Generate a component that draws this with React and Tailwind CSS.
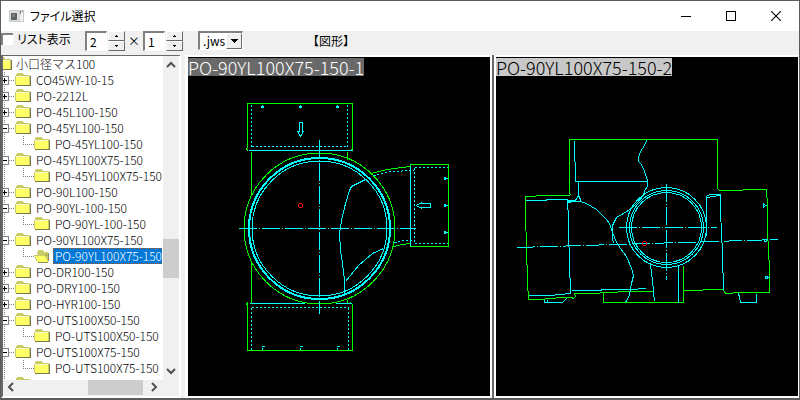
import React, { useState } from 'react';

const TREE = [
  { id: 1, level: 1, state: 'plus', label: 'CO45WY-10-15' },
  { id: 2, level: 1, state: 'plus', label: 'PO-2212L' },
  { id: 3, level: 1, state: 'plus', label: 'PO-45L100-150' },
  { id: 4, level: 1, state: 'minus', label: 'PO-45YL100-150' },
  { id: 5, level: 2, label: 'PO-45YL100-150' },
  { id: 6, level: 1, state: 'minus', label: 'PO-45YL100X75-150' },
  { id: 7, level: 2, label: 'PO-45YL100X75-150' },
  { id: 8, level: 1, state: 'plus', label: 'PO-90L100-150' },
  { id: 9, level: 1, state: 'minus', label: 'PO-90YL-100-150' },
  { id: 10, level: 2, label: 'PO-90YL-100-150' },
  { id: 11, level: 1, state: 'minus', label: 'PO-90YL100X75-150' },
  { id: 12, level: 2, label: 'PO-90YL100X75-150' },
  { id: 13, level: 1, state: 'plus', label: 'PO-DR100-150' },
  { id: 14, level: 1, state: 'plus', label: 'PO-DRY100-150' },
  { id: 15, level: 1, state: 'plus', label: 'PO-HYR100-150' },
  { id: 16, level: 1, state: 'minus', label: 'PO-UTS100X50-150' },
  { id: 17, level: 2, label: 'PO-UTS100X50-150' },
  { id: 18, level: 1, state: 'minus', label: 'PO-UTS100X75-150' },
  { id: 19, level: 2, label: 'PO-UTS100X75-150' },
];

const GREEN = '#00ff00';
const CYAN = '#00ffff';
const CENTER_DASH = '18 2 1 2';

const FolderIcon = ({ open, clipped }) => (
  <svg
    className={clipped ? 'w-[9px] h-4 shrink-0' : 'w-4 h-4 shrink-0'}
    viewBox={clipped ? '7 0 9 16' : '0 0 16 16'}
    shapeRendering="crispEdges"
    aria-hidden="true"
  >
    {open ? (
      <>
        <path d="M3 4h1V2h5v1h1v1h4v9H5z" fill="#cccc66" />
        <path d="M14 5h1v8h-1zM12 6h1v2h-1z" fill="#8c8c5a" />
        <path d="M1 7h10v2h1v2h1v2h1v1H3v-2H2v-2H1z" fill="#ffff66" />
        <path d="M0 7h11v1H0zM1 9h1v2H1zM2 11h1v2H2z" fill="#cccc66" />
        <path d="M3 14h11v1H4z" fill="#8c8c5a" />
      </>
    ) : (
      <>
        <path d="M1 14h15V4h-1v9H1z" fill="#77774a" />
        <path d="M0 4h1V2h1V1h6v1h1v1h6v10H0z" fill="#cccc66" />
        <path d="M1 4h13v9H1z" fill="#ffff66" />
        <path d="M1 4h13v1H1z" fill="#f5f5d0" />
      </>
    )}
  </svg>
);

const BranchLines = ({ level, state }) =>
  level === 1 ? (
    <svg className="w-3 h-4 shrink-0" viewBox="0 0 12 16" shapeRendering="crispEdges" aria-hidden="true">
      <path d="M1.5 0v16" stroke="#808080" strokeDasharray="1 1" />
      <path d="M6 8.5h6" stroke="#808080" strokeDasharray="1 1" />
      <path d="M-1 4.5h6.5v8H-1" fill="#fff" stroke="#808080" />
      <path d="M0 8.5h4" stroke="#000" />
      {state === 'plus' && <path d="M1.5 6v5" stroke="#000" />}
    </svg>
  ) : (
    <svg className="w-[31px] h-4 shrink-0" viewBox="0 0 31 16" shapeRendering="crispEdges" aria-hidden="true">
      <path d="M1.5 0v16M20.5 0v9M20 8.5h11" fill="none" stroke="#808080" strokeDasharray="1 1" />
    </svg>
  );

const Chevron = ({ d }) => (
  <svg className="w-4 h-4" viewBox="0 0 16 16" fill="none" stroke="#505050" strokeWidth="2" aria-hidden="true">
    <path d={d} />
  </svg>
);

const Spinner = ({ label, value, onChange }) => (
  <div className="flex items-start gap-px">
    <input
      type="text"
      aria-label={label}
      value={value}
      onChange={(e) => onChange(Number(e.target.value) || 1)}
      className="w-[22px] h-5 pl-[3px] pb-px bg-white border-t-2 border-l-2 border-b border-r border-t-[#808080] border-l-[#808080] border-b-white border-r-white text-[12px] leading-4 outline-none"
    />
    <div className="flex flex-col w-[17px]">
      {[1, -1].map((step) => (
        <button
          key={step}
          type="button"
          aria-label={step > 0 ? `${label} +` : `${label} -`}
          onClick={() => onChange(Math.max(1, value + step))}
          className="h-[10px] flex items-center justify-center bg-[#f0f0f0] border border-t-white border-l-white border-b-[#696969] border-r-[#696969]"
        >
          <svg width="3" height="2" viewBox="0 0 3 2" shapeRendering="crispEdges" aria-hidden="true">
            <path d={step > 0 ? 'M1 0h1v1h1v1H0V1h1z' : 'M0 0h3v1H2v1H1V1H0z'} fill="#000" />
          </svg>
        </button>
      ))}
    </div>
  </div>
);

const TitleBar = () => (
  <header className="h-[30px] shrink-0 flex items-center bg-white">
    <svg className="ml-2 w-4 h-[14px]" viewBox="0 0 16 14" shapeRendering="crispEdges" aria-hidden="true">
      <path d="M0 1h15v12H0z" fill="#c8cccc" />
      <path d="M1 2h9v10H1z" fill="#dedede" />
      <path d="M2 4h6v7H2z" fill="#606464" />
      <path d="M3 5h3v3H3z" fill="#7c8080" />
      <path d="M11 3h3v9h-3z" fill="#f4f4f4" />
      <path d="M11 2h1v3h-1zM13 2h1v1h-1z" fill="#808484" />
    </svg>
    <h1 className="ml-[5px] text-[12px] leading-4 font-normal text-black [font-feature-settings:'palt']">ファイル選択</h1>
    <div className="ml-auto flex h-full">
      <button type="button" aria-label="最小化" className="w-[45px] flex items-center justify-center">
        <svg width="10" height="10" viewBox="0 0 10 10" shapeRendering="crispEdges"><path d="M0 5.5h10" stroke="#000" /></svg>
      </button>
      <button type="button" aria-label="最大化" className="w-[45px] flex items-center justify-center">
        <svg width="10" height="10" viewBox="0 0 10 10" shapeRendering="crispEdges"><path d="M.5.5h9v9h-9z" fill="none" stroke="#000" /></svg>
      </button>
      <button type="button" aria-label="閉じる" className="w-[46px] flex items-center justify-center">
        <svg width="10" height="10" viewBox="0 0 10 10"><path d="M0 0l10 10M10 0L0 10" stroke="#000" strokeWidth="1.1" /></svg>
      </button>
    </div>
  </header>
);

const Toolbar = () => {
  const [listView, setListView] = useState(false);
  const [cols, setCols] = useState(2);
  const [rows, setRows] = useState(1);
  const [ext, setExt] = useState('.jws');

  return (
    <div className="h-6 shrink-0 flex items-start bg-[#f0f0f0]">
      <label className="w-[84px] flex items-center text-[12px] leading-4 [font-feature-settings:'palt']">
        <input
          type="checkbox"
          checked={listView}
          onChange={(e) => setListView(e.target.checked)}
          className="appearance-none w-3 h-3 shrink-0 mr-1 bg-white border-t-2 border-l-2 border-[#808080] checked:bg-[#404040]"
        />
        リスト表示
      </label>
      <Spinner label="列" value={cols} onChange={setCols} />
      <span className="w-[18px] text-center text-[12px] leading-5">×</span>
      <Spinner label="行" value={rows} onChange={setRows} />
      <div className="relative ml-[15px] w-[45px] h-[19px]">
        <select
          aria-label="拡張子"
          value={ext}
          onChange={(e) => setExt(e.target.value)}
          className="block appearance-none w-full h-[19px] pl-[3px] bg-white border-t-2 border-l-2 border-b border-r border-t-[#808080] border-l-[#808080] border-b-white border-r-white text-[12px] leading-4 outline-none"
        >
          <option value=".jws">.jws</option>
          <option value=".jwk">.jwk</option>
        </select>
        <span className="absolute right-px top-[2px] bottom-px w-4 flex items-center justify-center bg-[#f0f0f0] border border-t-white border-l-white border-b-[#696969] border-r-[#696969] pointer-events-none">
          <svg width="7" height="4" viewBox="0 0 7 4" shapeRendering="crispEdges" aria-hidden="true">
            <path d="M0 0h7v1H6v1H5v1H4v1H3V3H2V2H1V1H0z" fill="#000" />
          </svg>
        </span>
      </div>
      <span className="ml-16 text-[12px] leading-5">【図形】</span>
    </div>
  );
};

const FolderTree = () => {
  const [selected, setSelected] = useState(12);

  return (
    <nav className="w-[180px] mr-1 shrink-0 flex flex-col border-t border-l-2 border-t-[#696969] border-l-[#696969] border-r-2 border-r-white border-b-2 border-b-white bg-[#f0f0f0]">
      <div className="flex flex-1 min-h-0">
        <ul className="flex-1 min-w-0 overflow-hidden bg-white text-[12px] leading-4 font-light whitespace-nowrap">
          <li className="flex h-4">
            <FolderIcon clipped />
            <span className="ml-1">小口径マス100</span>
          </li>
          {TREE.map((item) => {
            const active = item.id === selected;
            return (
              <li key={item.id}>
                <button type="button" onClick={() => setSelected(item.id)} className="flex w-full h-4 text-left">
                  <BranchLines level={item.level} state={item.state} />
                  <FolderIcon open={active} />
                  <span
                    className={
                      active
                        ? 'ml-[3px] h-4 pl-px leading-[14px] bg-[#0078d7] text-white border border-r-0 border-dotted border-[#a05a20]'
                        : 'ml-[3px] pl-[2px]'
                    }
                  >
                    {item.label}
                  </span>
                </button>
              </li>
            );
          })}
          <li className="flex h-4">
            <BranchLines level={1} state="plus" />
            <FolderIcon />
          </li>
        </ul>
        <div className="w-4 flex flex-col justify-between">
          <button type="button" aria-label="上へ" className="h-4"><Chevron d="M4 11l4-4 4 4" /></button>
          <div className="flex-1 flex flex-col">
            <div className="grow-[166]" />
            <div className="h-[39px] bg-[#cdcdcd]" />
            <div className="grow-[86]" />
          </div>
          <button type="button" aria-label="下へ" className="h-4"><Chevron d="M4 5l4 4 4-4" /></button>
        </div>
      </div>
      <div className="h-4 shrink-0 flex pr-[17px]">
        <button type="button" aria-label="左へ" className="w-4"><Chevron d="M10 3L6 7l4 4" /></button>
        <div className="flex-1 flex">
          <div className="flex-1" />
          <div className="w-[55px] h-[15px] bg-[#cdcdcd]" />
        </div>
        <button type="button" aria-label="右へ" className="ml-[3px] w-4"><Chevron d="M6 3l4 4-4 4" /></button>
      </div>
    </nav>
  );
};

const PlanDrawing = () => (
  <svg
    className="block w-full h-full"
    viewBox="188 57 302 339"
    preserveAspectRatio="xMinYMin meet"
    shapeRendering="crispEdges"
    fill="none"
    aria-hidden="true"
  >
    <g transform="translate(.5 .5)">
      <g stroke={GREEN}>
        <path d="M248 150l-2-1v-1l1-1v-44h105v45l-1 2" />
        <path d="M251 151v44M347 151v8M251 261v42M347 299v3" />
        <path d="M248 303l-1-1-1 2h1v46h105v-46l-2-2" />
        <circle cx="319" cy="228" r="75.5" />
        <path d="M371 173l11-3 11-2 17-2v-2h38v82h-38v-3l-8 1-9 2" />
      </g>
      <g stroke={CYAN}>
        <path d="M248 150h104M249 303h55M335 303h16M410 165v80" />
        <g strokeDasharray="2 2">
          <path d="M251 104v42M251 146h96M347 104v42" />
          <path d="M251 307v42M251 307h97M348 307v42" />
          <path d="M414 167v76M414 167h33M414 243h33" />
          <path d="M373 175l17-4 24-1M394 242l8-2h12" />
        </g>
        <circle cx="319" cy="228" r="71" />
        <circle cx="319" cy="228" r="70" />
        <circle cx="319" cy="228" r="67.5" />
        <path d="M365 179l-6 3-8 4-2 4-4 13-4 17-2 13 1 17 2 13 2 17v13" />
        <path d="M383 248l-11 5-14 12-13 16" />
        <g strokeDasharray={CENTER_DASH}>
          <path d="M319 139v174M238 228h177" />
        </g>
        <path d="M299 122h3v9h1l-3 5-3-5h2z" />
        <path d="M430 203v4h-9v1l-5-3 5-3v1z" />
        <path d="M262 104v1M261 107v-1h2v1zM300 104v1M299 107v-1h2v1zM337 104v1M336 107v-1h2v1z" />
        <path d="M261 346h3M262 347v2M299 346h3M300 347v2M336 346h3M337 347v2" />
        <path d="M447 178h-2M444 177h1v2h-1zM447 205h-2M444 204h1v2h-1zM447 232h-2M444 231h1v2h-1z" />
      </g>
      <circle cx="300" cy="205" r="2" stroke="#ff0000" />
    </g>
  </svg>
);

const SectionDrawing = () => (
  <svg
    className="block w-full h-full"
    viewBox="496 57 302 339"
    preserveAspectRatio="xMinYMin meet"
    shapeRendering="crispEdges"
    fill="none"
    aria-hidden="true"
  >
    <g transform="translate(.5 .5)">
      <g stroke={GREEN}>
        <path d="M717 139H569v54l1 1-1 1h-23l-21 1v18l1 33 1 34 1 18h11l22-2h10l2 1 2-2-1-3h17l35-2h27" />
        <path d="M603 292v10h80v-37M683 290h19l1-1h20l1 3 2 1h6l1-1h36v-15l-1-36-1-1v-34l-1-17h-23l-1 1h-23l-2-2v-49" />
      </g>
      <g stroke={CYAN}>
        <path d="M574 140v20l1 3v18h72M578 181v14l-2 3-1 2h-8l1 2 5-1M578 195l2 4v2" />
        <path d="M567 201h13l6 2 10 6 10 10 3 4 3 9 4 10 4 6 6 8 5 12 2 7-2 8-2 12-4 7" />
        <path d="M646 140l-2 5-4 6-2 6v4l3 3 3 7 3 9v6l-3 4-1 5-7 8-8 7-12 7-4 8v15l2 3" />
        <path d="M525 200h21v-1h21l1 20v27l1 1v30l1 1v15l-10 1-11 1h-21" />
        <path d="M571 290h30v-1h36l1-1h7" />
        <path d="M544 299v3h18l4-4M547 299v3" />
        <circle cx="666" cy="227" r="40" />
        <circle cx="666" cy="227" r="37" />
        <circle cx="666" cy="227" r="35" />
        <path d="M650 263l1 10 1 7 1 11 1 10M678 265v37" />
        <path d="M706 235v-39l3-2h11v9l1 37 1 5v22l1 10v12M707 197l5-1 8-1" />
        <path d="M738 293l1 4 1 5h16v-9" />
        <g strokeDasharray={CENTER_DASH}>
          <path d="M666 183v96M618 227h98M517 247l261-8" />
        </g>
        <path d="M766 205h-1M763 203v4l2-2zM764 239h2v2h-2zM769 277h-2M765 276h2v2h-2z" />
      </g>
      <circle cx="644" cy="243" r="2" stroke="#ff0000" />
    </g>
  </svg>
);

const App = () => (
  <div className="h-screen flex flex-col overflow-hidden bg-[#f0f0f0] border border-b-2 border-[#5c5c5c] text-black font-['Noto_Sans_CJK_JP',sans-serif]">
    <TitleBar />
    <Toolbar />
    <main className="flex-1 min-h-0 flex">
      <FolderTree />
      <div className="flex-1 min-w-0 grid grid-cols-2">
        <section className="relative overflow-hidden bg-black border-2 border-l-[3px] border-white">
          <PlanDrawing />
          <h2 className="absolute left-0 top-px h-[18px] bg-[#696969] text-white text-[18px] leading-[18px] font-light whitespace-nowrap">
            PO-90YL100X75-150-1
          </h2>
        </section>
        <div className="border-l-2 border-[#696969]">
          <section className="h-full relative overflow-hidden bg-black border-2 border-r border-white">
            <SectionDrawing />
            <h2 className="absolute left-0 top-px h-[18px] bg-[#c8c8c8] text-black text-[18px] leading-[18px] font-light whitespace-nowrap">
              PO-90YL100X75-150-2
            </h2>
          </section>
        </div>
      </div>
    </main>
  </div>
);

export default App;
